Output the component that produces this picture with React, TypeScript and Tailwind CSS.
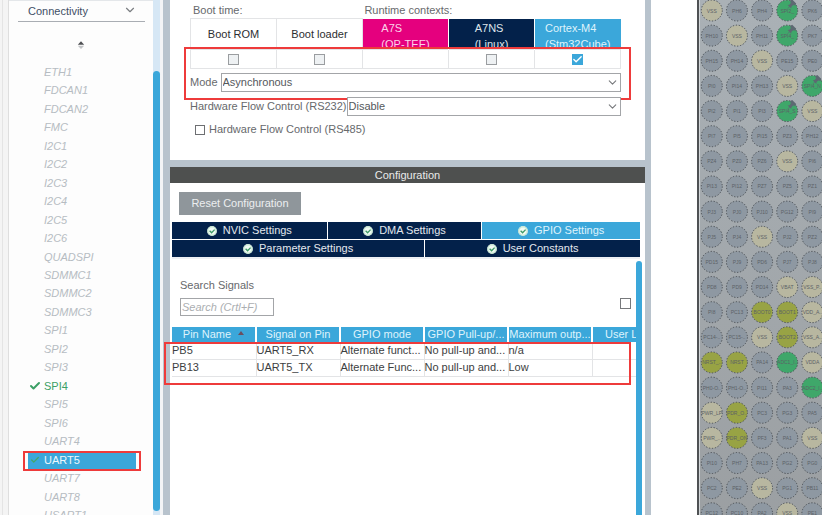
import { Check, ChevronDown } from "lucide-react";

const peripherals = [
  "ETH1", "FDCAN1", "FDCAN2", "FMC", "I2C1", "I2C2", "I2C3", "I2C4", "I2C5",
  "I2C6", "QUADSPI", "SDMMC1", "SDMMC2", "SDMMC3", "SPI1", "SPI2", "SPI3",
  "SPI4", "SPI5", "SPI6", "UART4", "UART5", "UART7", "UART8", "USART1",
];

// y = power, o = boot/reset, g = pinned signal, a = analog, no prefix = free
const pins = [
  ["y:VSS", "PH6", "PH4", "g:SPI2_", "PK6"],
  ["PH10", "y:VSS", "PH11", "g:SPI4_", "PK7"],
  ["PH15", "PH14", "y:VSS", "PE15", "PE0"],
  ["PI0", "PI14", "PH13", "y:VSS", "g:SPI4_N"],
  ["PI2", "PI1", "PI3", "g:SPI4_S", "y:VSS"],
  ["PI7", "PI5", "PI15", "PZ3", "PH12"],
  ["PZ4", "PZ0", "PZ6", "y:VSS", "PI6"],
  ["PI13", "PI12", "PZ7", "PZ5", "PZ1"],
  ["PJ3", "PJ0", "PJ10", "PG12", "PI9"],
  ["PJ5", "PJ4", "y:VSS", "PJ2", "PZ2"],
  ["PD15", "PJ9", "PD6", "PJ7", "PJ8"],
  ["PD8", "PD9", "PD14", "y:VBAT", "y:VSS_P.."],
  ["PI8", "PC13", "o:BOOT0", "o:BOOT1", "y:VDD_A.."],
  ["PC14-..", "PC15-..", "y:VSS", "o:BOOT2", "y:VSS_A.."],
  ["o:NRST_..", "o:NRST", "PA14", "a:ADC1_I..", "y:VDDA"],
  ["PH0-O..", "PH1-O..", "PI11", "PA3", "a:ADC2_I.."],
  ["y:PWR_LP", "o:PDR_O..", "PC3", "PG3", "PA5"],
  ["y:PWR_..", "o:PDR_ON", "PF3", "PA1", "y:VSS"],
  ["PI10", "PH7", "PA13", "PG2", "PG0"],
  ["PC2", "PE2", "y:VSS", "PG1", "PB11"],
  ["PC12", "PC10", "PA2", "y:VSS", "PE1"],
];

const pinFill: Record<string, string> = {
  y: "#b8b7a0",
  o: "#98a344",
  g: "#3fa76a",
  a: "#3fa76a",
};

const signals = [
  ["PB5", "UART5_RX", "Alternate funct...", "No pull-up and...", "n/a"],
  ["PB13", "UART5_TX", "Alternate Func...", "No pull-up and...", "Low"],
];

const StatusIcon = () => (
  <svg className="h-[10px] w-[10px] shrink-0" viewBox="0 0 10 10">
    <circle cx="5" cy="5" r="4.9" fill="#f2fbf4" />
    <circle cx="5" cy="5" r="4.2" fill="none" stroke="#a5d8b8" strokeWidth="0.7" />
    <path d="M2.6 4.8l2 2 3-3.2" fill="none" stroke="#3c9a66" strokeWidth="1.3" />
  </svg>
);

const Tab = ({ label, active }: { label: string; active?: boolean }) => (
  <button
    type="button"
    role="tab"
    aria-selected={!!active}
    className={`flex h-[17px] items-center justify-center gap-1.5 ${
      active ? "bg-[#3ba7da] text-[#dff3fc]" : "bg-[#03214a] text-[#e3e8ee]"
    }`}
  >
    <StatusIcon />
    {label}
  </button>
);

const Box = ({ label, checked }: { label: string; checked?: boolean }) => (
  <span className="relative mx-auto block h-[11px] w-[11px]">
    <input
      type="checkbox"
      aria-label={label}
      defaultChecked={checked}
      className="block h-[11px] w-[11px] appearance-none border border-[#9a9da0] bg-[#eef1f3] checked:border-[#3ba7da] checked:bg-[#3ba7da]"
    />
    {checked && (
      <Check className="pointer-events-none absolute inset-0 h-[11px] w-[11px] text-white" strokeWidth={3} />
    )}
  </span>
);

const Select = ({ id, value }: { id: string; value: string }) => (
  <div className="relative min-w-0 flex-1">
    <select
      id={id}
      className="block h-[19px] w-full appearance-none border border-[#a3a5a8] bg-white pl-px text-[#55585c]"
    >
      <option>{value}</option>
    </select>
    <ChevronDown className="pointer-events-none absolute top-[3px] right-[2px] h-[13px] w-[13px] text-[#77797c]" />
  </div>
);

const Sidebar = () => (
  <aside className="flex w-[163px] shrink-0 bg-[#f3f4f6]">
    <div className="flex w-[9px] shrink-0 justify-between bg-[#f4f4f4] pl-0.5">
      <span className="w-px bg-[#e4e4e4]" />
      <span className="w-px bg-[#dedede]" />
    </div>
    <div className="min-w-0 flex-1 border-t border-[#e4e7ea] bg-[#fdfdfd] pl-[9px]">
      <div className="relative mr-2 h-[21px] border-b border-[#a9adb3]">
        <select
          aria-label="Category"
          className="block h-5 w-full appearance-none pl-[10px] text-[#3f4f66]"
        >
          <option>Connectivity</option>
        </select>
        <ChevronDown className="pointer-events-none absolute top-[2px] right-2 h-[14px] w-[14px] text-[#7b7e82]" />
      </div>
      <button type="button" aria-label="Sort" className="mt-[18px] mb-[13px] ml-[59px] block">
        <svg className="h-[10px] w-[8px]" viewBox="0 0 8 10">
          <path d="M0.8 4.8L4 1.2l3.2 3.6z" fill="#4d4f52" />
          <path d="M0.8 5.8L4 9l3.2-3.2z" fill="#c2c4c6" />
        </svg>
      </button>
      <ul className="grid h-[462px] auto-rows-fr">
        {peripherals.map((name) => {
          if (name === "UART5") {
            return (
              <li
                key={name}
                className="relative mr-[17px] ml-[10px] flex min-h-0 items-center bg-[#3ba7da] pl-4 text-[#eef8fd]"
              >
                <Check className="absolute left-0.5 h-[10px] w-[10px] text-[#44a867]" strokeWidth={3} />
                {name}
                <span className="pointer-events-none absolute top-0 -right-[5px] -bottom-px -left-[5px] border-2 border-[#ee3b3b]" />
              </li>
            );
          }
          if (name === "SPI4") {
            return (
              <li key={name} className="relative flex min-h-0 items-center pl-[26px] text-[#3ca066]">
                <Check className="absolute left-[11px] h-3 w-3" strokeWidth={4} />
                {name}
              </li>
            );
          }
          return (
            <li key={name} className="flex min-h-0 items-center pl-[26px] text-[#b6bcc2] italic">
              {name}
            </li>
          );
        })}
      </ul>
    </div>
    <div className="mr-[3px] w-[7px] bg-[#d6e7f5] pt-[71px]">
      <div className="h-[440px] rounded-full bg-[#3ba7da]" />
    </div>
  </aside>
);

const contexts = [
  { label: "Boot ROM", style: "bg-white text-[#2c2e31] border border-[#e3e4e6]" },
  { label: "Boot loader", style: "bg-white text-[#2c2e31] border border-[#e3e4e6]" },
  { label: "A7S", sub: "(OP-TEE)", style: "bg-[#e5007e] text-[#fbd3e8]" },
  { label: "A7NS", sub: "(Linux)", style: "bg-[#03214a] text-[#dfe4ea] border-l border-white" },
  { label: "Cortex-M4", sub: "(Stm32Cube)", style: "bg-[#3ba7da] text-[#dff3fc] border-l border-white" },
];

const ModePanel = () => (
  <section className="h-[160px] shrink-0 bg-white pr-6 pl-5 text-[#67696c]">
    <div className="flex h-[18px] items-center pt-[3px]">
      <span className="w-2/5 pl-[3px]">Boot time:</span>
      <span className="pl-0.5">Runtime contexts:</span>
    </div>
    <div className="relative">
      <table className="w-full table-fixed border-collapse">
        <thead>
          <tr>
            {contexts.map((c) => (
              <th key={c.label} className={`p-0 font-normal ${c.style}`}>
                <div className="flex h-[30px] justify-center overflow-hidden pt-px">
                  <div className={c.sub ? "text-left leading-4" : "self-center"}>
                    {c.label}
                    {c.sub && <div>{c.sub}</div>}
                  </div>
                </div>
              </th>
            ))}
          </tr>
        </thead>
        <tbody>
          <tr>
            {contexts.map((c, i) => (
              <td key={c.label} className="h-[19px] border border-[#e3e4e6] p-0">
                {i !== 2 && <Box label={c.label} checked={i === 4} />}
              </td>
            ))}
          </tr>
        </tbody>
      </table>
      <div className="mt-1 flex items-center gap-[3px]">
        <label htmlFor="mode">Mode</label>
        <Select id="mode" value="Asynchronous" />
      </div>
      <div className="pointer-events-none absolute top-[29px] -right-[10px] -bottom-2 -left-[6px] border-2 border-[#ee3b3b]" />
    </div>
    <div className="mt-[5px] flex items-center">
      <label htmlFor="rs232">Hardware Flow Control (RS232)</label>
      <Select id="rs232" value="Disable" />
    </div>
    <label className="mt-1.5 ml-[5px] flex items-center gap-1">
      <input type="checkbox" className="h-[10px] w-[10px] appearance-none border border-[#6d6f72] bg-white" />
      Hardware Flow Control (RS485)
    </label>
  </section>
);

const th = "h-[15px] border-r-2 border-white p-0 font-normal whitespace-nowrap";

const ConfigPanel = () => (
  <section className="flex min-h-0 flex-1 flex-col bg-white">
    <h2 className="flex h-4 shrink-0 items-center justify-center bg-[#4e504f] text-[#e9eaea]">
      Configuration
    </h2>
    <button
      type="button"
      className="mt-[9px] ml-[9px] h-[23px] w-[122px] shrink-0 bg-[#8f969b] text-[#eceef0]"
    >
      Reset Configuration
    </button>
    <div role="tablist" className="mt-[7px] mr-[5px] ml-0.5 flex shrink-0 flex-col gap-px border-b-2 border-[#eef0f4]">
      <div className="grid grid-cols-[155fr_154fr_158fr] gap-px">
        <Tab label="NVIC Settings" />
        <Tab label="DMA Settings" />
        <Tab label="GPIO Settings" active />
      </div>
      <div className="grid grid-cols-[54fr_46fr] gap-px">
        <Tab label="Parameter Settings" />
        <Tab label="User Constants" />
      </div>
    </div>
    <div className="mr-[3px] flex min-h-0 flex-1 pt-0.5">
      <div className="min-w-0 flex-1 pt-4 pl-0.5">
        <div className="flex items-end justify-between pr-[5px] pl-2">
          <div>
            <label htmlFor="search" className="block leading-4 text-[#67696c]">
              Search Signals
            </label>
            <input
              id="search"
              type="text"
              placeholder="Search (Crtl+F)"
              className="mt-[5px] block h-[18px] w-[94px] border border-[#a3a5a8] pl-px italic placeholder:text-[#abaeb1]"
            />
          </div>
          <input
            type="checkbox"
            aria-label="Show only modified pins"
            className="mb-[7px] h-[11px] w-[11px] appearance-none border border-[#77797c] bg-white"
          />
        </div>
        <div className="relative mt-[11px]">
          <table className="w-full table-fixed border-collapse">
            <thead className="bg-[#3ba7da] text-[#dff3fc]">
              <tr>
                <th className={`w-[84px] ${th}`}>
                  <span className="flex items-center justify-center gap-[7px]">
                    Pin Name
                    <svg className="-mt-1 h-1 w-1.5" viewBox="0 0 6 4">
                      <path d="M0 4L3 0l3 4z" fill="#6b4f60" />
                    </svg>
                  </span>
                </th>
                <th className={`w-[84px] ${th}`}>Signal on Pin</th>
                <th className={`w-[84px] ${th}`}>GPIO mode</th>
                <th className={`w-[84px] ${th}`}>GPIO Pull-up/...</th>
                <th className={`w-[84px] ${th}`}>Maximum outp...</th>
                <th className="overflow-hidden p-0 pl-3 text-left font-normal whitespace-nowrap">
                  User Label
                </th>
              </tr>
            </thead>
            <tbody className="text-[#3c3e41]">
              {signals.map((row) => (
                <tr key={row[0]}>
                  {row.map((cell, i) => (
                    <td key={i} className="h-[17px] border-r border-b border-[#e3e4e6] p-0 whitespace-nowrap">
                      {cell}
                    </td>
                  ))}
                  <td className="border-b border-[#e3e4e6] p-0" />
                </tr>
              ))}
            </tbody>
          </table>
          <div className="pointer-events-none absolute top-[15px] right-[5px] -bottom-2 -left-2 border-2 border-[#ee3b3b]" />
        </div>
      </div>
      <div className="w-[6px] shrink-0 rounded-t-full bg-[#3ba7da]" />
    </div>
  </section>
);

const PITCH = 25.14;

const Pinout = () => (
  <aside className="w-[125px] shrink-0 overflow-hidden border-l-2 border-[#4f5254] bg-[#a4aaae]">
    <svg className="block h-[530px] w-[123px]" viewBox="699 0 123 530">
      <defs>
        <linearGradient id="chip" x1="0" y1="0" x2="0" y2="1">
          <stop offset="0" stopColor="#aab1b6" />
          <stop offset="1" stopColor="#9b9fa2" />
        </linearGradient>
      </defs>
      <rect x="699" width="123" height="530" fill="url(#chip)" />
      <rect x="699" width="1" height="530" fill="#d3d7d9" />
      {pins.map((row, r) =>
        row.map((pin, c) => {
          const [kind, name] = pin.includes(":") ? pin.split(":") : ["", pin];
          const cx = 711.8 + c * PITCH;
          const cy = 10.5 + r * PITCH;
          return (
            <g key={`${r}-${c}`}>
              <circle
                cx={cx}
                cy={cy}
                r="10.5"
                fill={pinFill[kind] ?? "#8e98a2"}
                stroke="#4a4f55"
                strokeWidth="1"
                strokeDasharray="1.3 1.7"
              />
              <text x={cx} y={cy + 2} textAnchor="middle" fontSize="5" fill="#5c6267">
                {name}
              </text>
              {kind === "g" && (
                <g transform={`translate(${cx + 4.5} ${cy - 7})`}>
                  <path d="M-1.5-3l2-1 4 4-1 2-2-.5-1.8 1.7-.2 1.8-3.6-3.6 1.8-.2 1.4-1.6z" fill="#5d6972" />
                  <path d="M-1.4 2.4L-4 5" stroke="#5d6972" strokeWidth="0.8" />
                </g>
              )}
            </g>
          );
        })
      )}
    </svg>
  </aside>
);

export default function App() {
  return (
    <div className="flex h-screen overflow-hidden bg-white font-['Liberation_Sans',Arial,sans-serif] text-[11px] leading-[15px]">
      <Sidebar />
      <main className="flex min-w-0 flex-1 flex-col gap-[7px] border-r-[6px] border-l-[7px] border-[#b8c3cd] bg-[#b8c3cd]">
        <ModePanel />
        <ConfigPanel />
      </main>
      <div className="w-[46px] shrink-0" />
      <Pinout />
    </div>
  );
}
